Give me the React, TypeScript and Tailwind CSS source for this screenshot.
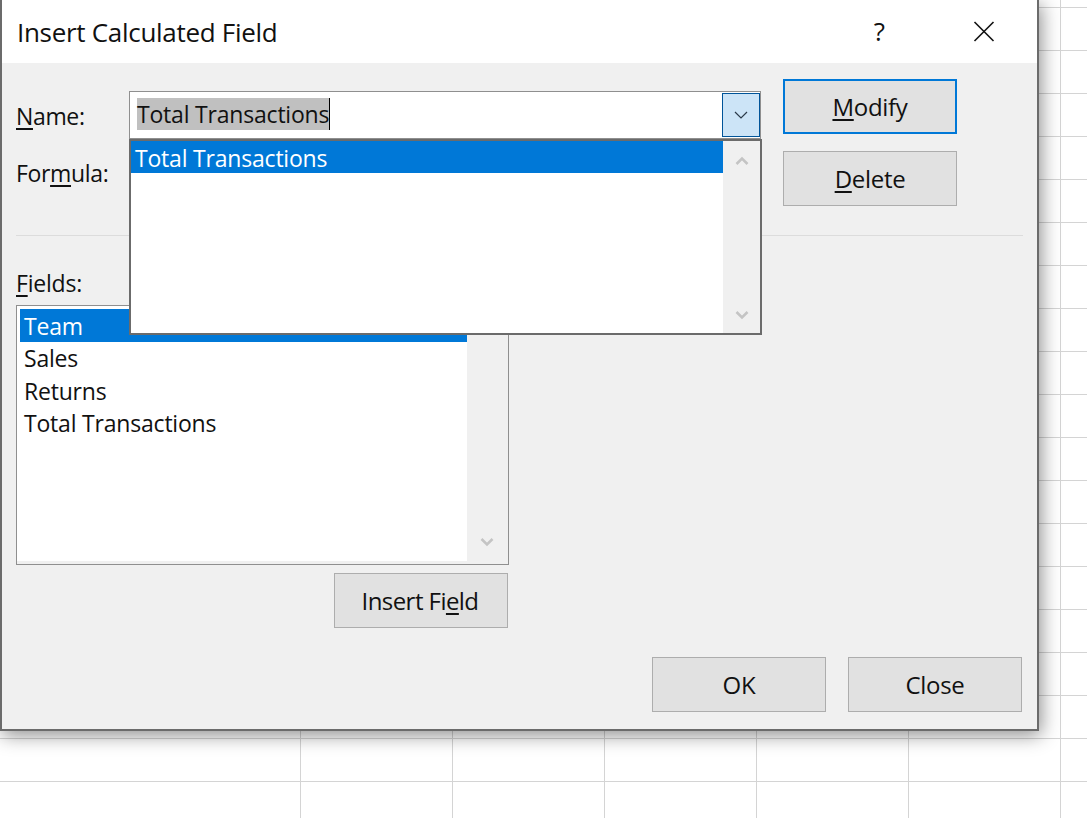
const font = "font-['Open_Sans','Noto_Sans',sans-serif]";

function Chevron({ up = false, className = "" }: { up?: boolean; className?: string }) {
  return (
    <svg width="14" height="10" viewBox="0 0 14 10" className={className} fill="none">
      <path d={up ? "M1.5 8 L7 2.5 L12.5 8" : "M1.5 2 L7 7.5 L12.5 2"} stroke="#c4c4c4" strokeWidth="2.6" />
    </svg>
  );
}

function DialogButton({ children, focused = false, className = "" }: { children: React.ReactNode; focused?: boolean; className?: string }) {
  return (
    <div
      className={`flex w-[174px] h-[55px] items-center justify-center bg-[#e1e1e1] text-[#111] text-[24px] ${
        focused ? "border-2 border-[#0078d7]" : "border border-[#adadad]"
      } ${className}`}
    >
      <span>{children}</span>
    </div>
  );
}

function Key({ children }: { children: React.ReactNode }) {
  return <span className="underline decoration-[2px] underline-offset-[3px]">{children}</span>;
}

export default function App() {
  return (
    <div
      className={`relative w-[1087px] h-[818px] overflow-hidden bg-white ${font} bg-[linear-gradient(#d4d4d4_1px,transparent_1px),linear-gradient(90deg,transparent_300px,#d4d4d4_300px,#d4d4d4_301px,transparent_301px,transparent_452px,#d4d4d4_452px,#d4d4d4_453px,transparent_453px,transparent_604px,#d4d4d4_604px,#d4d4d4_605px,transparent_605px,transparent_756px,#d4d4d4_756px,#d4d4d4_757px,transparent_757px,transparent_908px,#d4d4d4_908px,#d4d4d4_909px,transparent_909px,transparent_1060px,#d4d4d4_1060px,#d4d4d4_1061px,transparent_1061px)] bg-[size:100%_43px,100%_100%] bg-[position:0_7px,0_0]`}
    >
      <div className="flex flex-col w-[1039px] h-[731px] bg-[#f0f0f0] border-l-2 border-r-2 border-b-2 border-[#6b6b6b] shadow-[2px_4px_18px_rgba(0,0,0,0.45)]">
        {/* title bar */}
        <div className="flex h-[63px] shrink-0 items-center bg-white pl-[15px] text-[#111]">
          <div className="pt-[1px] text-[26px] tracking-[-0.3px]">Insert Calculated Field</div>
          <div className="ml-auto mr-[88px] text-[26px]">?</div>
          <svg width="22" height="21" viewBox="0 0 22 21" className="mr-[42px]" fill="none">
            <path d="M1.5 1 L20.5 20 M20.5 1 L1.5 20" stroke="#111" strokeWidth="1.6" />
          </svg>
        </div>

        <div className="relative flex flex-1 flex-col pl-[14px] pr-[14px] text-[23px] text-[#111] tracking-[-0.2px]">
          {/* name / formula + side buttons */}
          <div className="flex h-[173px] shrink-0 border-b border-[#dcdcdc]">
            <div className="w-[113px] shrink-0 pt-[36px] leading-[34px] tracking-[-0.35px]">
              <div><Key>N</Key>ame:</div>
              <div className="mt-[23px]">For<Key>m</Key>ula:</div>
            </div>
            <div className="mt-[28px] flex h-[48px] w-[632px] shrink-0 items-center justify-between border border-[#8f8f8f] bg-white pl-[7px]">
              <span className="mb-[3px] flex h-[32px] items-center border-r border-black bg-[#c0c0c0] leading-[32px]">Total Transactions</span>
              <div className="flex h-[44px] w-[38px] items-center justify-center border border-[#005499] bg-[#cce4f7]">
                <svg width="14" height="8" viewBox="0 0 14 8" fill="none">
                  <path d="M1 1 L7 7 L13 1" stroke="#2b3a4a" strokeWidth="1.2" />
                </svg>
              </div>
            </div>
            <div className="ml-[22px] flex flex-col gap-[17px] pt-[16px]">
              <DialogButton focused className="tracking-[-0.3px]"><Key>M</Key>odify</DialogButton>
              <DialogButton className="tracking-[-0.3px]"><Key>D</Key>elete</DialogButton>
            </div>
          </div>

          {/* fields */}
          <div className="mt-[30px] h-[39px] shrink-0 leading-[34px]"><Key>F</Key>ields:</div>
          <div className="flex h-[260px] w-[493px] shrink-0 border border-[#8f8f8f] bg-[#f0f0f0] pb-[3px]">
            <div className="flex w-[450px] flex-col bg-white pl-[3px] pt-[3px]">
              <div className="h-[33px] bg-[#0078d7] pl-[4px] leading-[35px] text-white">Team</div>
              <div className="h-[32px] pl-[4px] leading-[33px]">Sales</div>
              <div className="h-[32px] pl-[4px] leading-[34px]">Returns</div>
              <div className="h-[32px] pl-[4px] leading-[34px]">Total Transactions</div>
            </div>
            <div className="flex flex-1 flex-col items-center justify-end pb-[14px] pr-[2px]">
              <Chevron />
            </div>
          </div>
          <div className="mt-[8px] flex w-[492px] shrink-0 justify-end">
            <DialogButton className="tracking-[-0.55px] pr-[2px]">Insert Fi<Key>e</Key>ld</DialogButton>
          </div>

          {/* footer */}
          <div className="mt-[29px] flex justify-end gap-[22px] pr-[1px] tracking-[-0.3px]">
            <DialogButton>OK</DialogButton>
            <DialogButton>Close</DialogButton>
          </div>

          {/* open dropdown lies over the fields list */}
          <div className="absolute left-[127px] top-[76px] flex h-[196px] w-[633px] border-2 border-[#6b6b6b] bg-white">
            <div className="w-[592px]">
              <div className="h-[32px] bg-[#0078d7] pl-[4px] leading-[35px] text-white">Total Transactions</div>
            </div>
            <div className="flex flex-1 flex-col items-center justify-between bg-[#f0f0f0] pb-[13px] pt-[15px]">
              <Chevron up />
              <Chevron />
            </div>
          </div>
        </div>
      </div>
    </div>
  );
}
